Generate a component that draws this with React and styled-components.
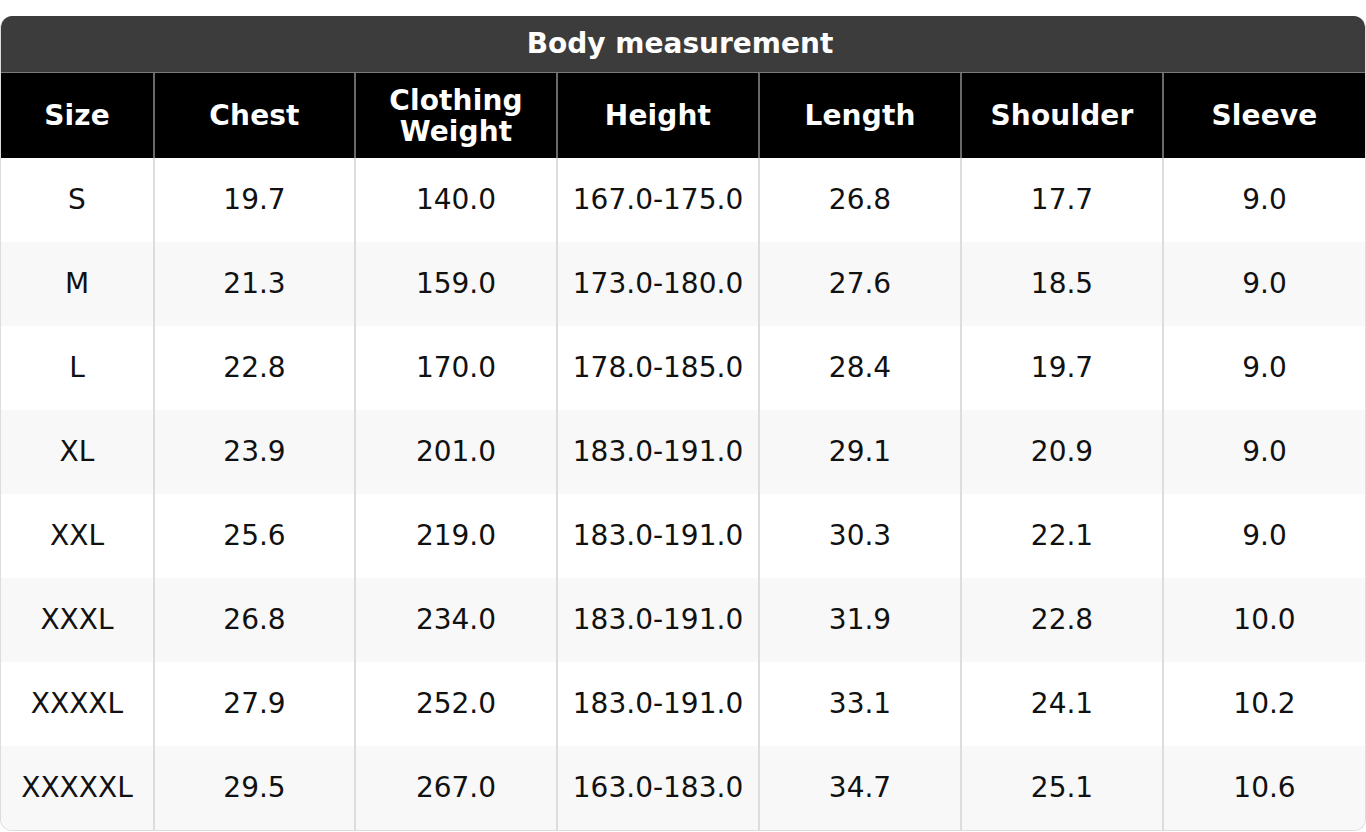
import React from "react";
import styled, { createGlobalStyle } from "styled-components";

const GlobalStyle = createGlobalStyle`
  html, body {
    margin: 0;
    padding: 0;
    background: #ffffff;
  }
  body {
    font-family: "DejaVu Sans", "Liberation Sans", sans-serif;
  }
`;

const Page = styled.div`
  padding-top: 16px;
`;

const Card = styled.div`
  width: 1366px;
  box-sizing: border-box;
  border: 1px solid #dcdcdc;
  border-top: none;
  border-radius: 12px;
  overflow: hidden;
  background: #ffffff;
`;

const Title = styled.div`
  background: #3c3c3c;
  color: #ffffff;
  font-weight: bold;
  font-size: 28px;
  line-height: 32px;
  text-align: center;
  padding: 12px 6px 12px 0;
  border-bottom: 1px solid #7a7a7a;
`;

const Table = styled.table`
  width: 100%;
  border-collapse: collapse;
  table-layout: fixed;
  font-size: 28px;
`;

const HeadCell = styled.th`
  background: #000000;
  color: #ffffff;
  font-weight: bold;
  line-height: 31px;
  height: 85px;
  padding: 0 8px;
  box-sizing: border-box;
  text-align: center;
  border-right: 2px solid #6a6a6a;
  letter-spacing: 0.15px;

  &:last-child {
    border-right: none;
  }
`;

const Row = styled.tr`
  background: ${(p) => (p.$alt ? "#f8f8f8" : "#ffffff")};
`;

const Cell = styled.td`
  color: #111111;
  line-height: 32px;
  height: 84px;
  padding: 0 8px;
  box-sizing: border-box;
  text-align: center;
  border-right: 2px solid #dddddd;

  &:last-child {
    border-right: none;
  }
`;

const columns = [
  { label: "Size", width: 153 },
  { label: "Chest", width: 201 },
  { label: ["Clothing", "Weight"], width: 202 },
  { label: "Height", width: 202 },
  { label: "Length", width: 202 },
  { label: "Shoulder", width: 202 },
  { label: "Sleeve", width: 202 },
];

const rows = [
  ["S", "19.7", "140.0", "167.0-175.0", "26.8", "17.7", "9.0"],
  ["M", "21.3", "159.0", "173.0-180.0", "27.6", "18.5", "9.0"],
  ["L", "22.8", "170.0", "178.0-185.0", "28.4", "19.7", "9.0"],
  ["XL", "23.9", "201.0", "183.0-191.0", "29.1", "20.9", "9.0"],
  ["XXL", "25.6", "219.0", "183.0-191.0", "30.3", "22.1", "9.0"],
  ["XXXL", "26.8", "234.0", "183.0-191.0", "31.9", "22.8", "10.0"],
  ["XXXXL", "27.9", "252.0", "183.0-191.0", "33.1", "24.1", "10.2"],
  ["XXXXXL", "29.5", "267.0", "163.0-183.0", "34.7", "25.1", "10.6"],
];

const App = () => (
  <>
    <GlobalStyle />
    <Page>
      <Card>
        <Title>Body measurement</Title>
        <Table>
          <colgroup>
            {columns.map((c, i) => (
              <col key={i} style={{ width: c.width }} />
            ))}
          </colgroup>
          <thead>
            <tr>
              {columns.map((c, i) => (
                <HeadCell key={i}>
                  {Array.isArray(c.label) ? (
                    <>
                      {c.label[0]}
                      <br />
                      {c.label[1]}
                    </>
                  ) : (
                    c.label
                  )}
                </HeadCell>
              ))}
            </tr>
          </thead>
          <tbody>
            {rows.map((r, i) => (
              <Row key={i} $alt={i % 2 === 1}>
                {r.map((v, j) => (
                  <Cell key={j}>{v}</Cell>
                ))}
              </Row>
            ))}
          </tbody>
        </Table>
      </Card>
    </Page>
  </>
);

export default App;
